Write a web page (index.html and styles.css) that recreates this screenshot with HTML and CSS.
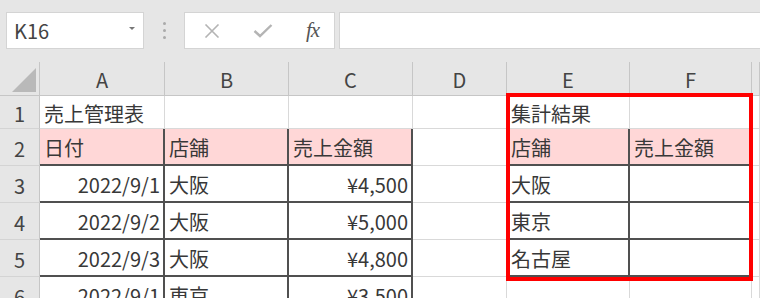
FILE: index.html
```html
<!DOCTYPE html>
<html lang="ja">
<head>
    <meta charset="UTF-8">
    <meta name="viewport" content="width=device-width, initial-scale=1.0">
    <title>売上管理表</title>
    <link rel="stylesheet" href="styles.css">
</head>
<body>
    <div class="toolbar">
        <div class="namebox"><span>K16</span><span class="caret"></span></div>
        <div class="grip"><i></i><i></i><i></i></div>
        <div class="fbuttons">
            <svg class="ico" width="18" height="14" viewBox="0 0 18 14"><path d="M2.5 0.5 L15.5 13.5 M15.5 0.5 L2.5 13.5" stroke="#b4b4b4" stroke-width="1.6" fill="none"/></svg>
            <svg class="ico" width="20" height="14" viewBox="0 0 20 14"><path d="M1.5 7 L7 12 L18.5 1" stroke="#b4b4b4" stroke-width="2.4" fill="none"/></svg>
            <span class="fx">fx</span>
        </div>
        <div class="formula"></div>
    </div>

    <div class="sheet">
        <div class="corner"><svg width="24" height="24" viewBox="0 0 24 24"><polygon points="0,24 24,24 24,0" fill="#b9b9b9"/></svg></div>
        <div class="colhead">A</div>
        <div class="colhead">B</div>
        <div class="colhead">C</div>
        <div class="colhead">D</div>
        <div class="colhead">E</div>
        <div class="colhead">F</div>
        <div class="colhead"></div>

        <div class="rowhead">1</div>
        <div class="cell">売上管理表</div>
        <div class="cell"></div>
        <div class="cell"></div>
        <div class="cell"></div>
        <div class="cell">集計結果</div>
        <div class="cell"></div>
        <div class="cell"></div>

        <div class="rowhead">2</div>
        <div class="cell head">日付</div>
        <div class="cell head">店舗</div>
        <div class="cell head">売上金額</div>
        <div class="cell"></div>
        <div class="cell head">店舗</div>
        <div class="cell head">売上金額</div>
        <div class="cell"></div>

        <div class="rowhead">3</div>
        <div class="cell tb num">2022/9/1</div>
        <div class="cell tb">大阪</div>
        <div class="cell tb num">¥4,500</div>
        <div class="cell"></div>
        <div class="cell tb">大阪</div>
        <div class="cell tb"></div>
        <div class="cell"></div>

        <div class="rowhead">4</div>
        <div class="cell tb num">2022/9/2</div>
        <div class="cell tb">大阪</div>
        <div class="cell tb num">¥5,000</div>
        <div class="cell"></div>
        <div class="cell tb">東京</div>
        <div class="cell tb"></div>
        <div class="cell"></div>

        <div class="rowhead">5</div>
        <div class="cell tb num">2022/9/3</div>
        <div class="cell tb">大阪</div>
        <div class="cell tb num">¥4,800</div>
        <div class="cell"></div>
        <div class="cell tb">名古屋</div>
        <div class="cell tb"></div>
        <div class="cell"></div>

        <div class="rowhead">6</div>
        <div class="cell tb num">2022/9/1</div>
        <div class="cell tb">東京</div>
        <div class="cell tb num">¥3,500</div>
        <div class="cell"></div>
        <div class="cell"></div>
        <div class="cell"></div>
        <div class="cell"></div>

        <div class="highlight"></div>
    </div>
</body>
</html>
```

FILE: styles.css
```css
body { margin: 0; background: #e6e6e6; font-family: "Noto Sans CJK JP", "Noto Sans", sans-serif; color: #383838; overflow: hidden; height: 298px; }

/* formula bar */
.toolbar { display: flex; align-items: center; height: 62px; padding: 0 0 1px 6px; box-sizing: border-box; background: #e6e6e6; }
.namebox { width: 138px; height: 37px; box-sizing: border-box; background: #fff; border: 1px solid #d4d4d4; display: flex; align-items: center; justify-content: space-between; padding: 0 8px 0 7px; font-size: 20px; color: #444; }
.caret { width: 0; height: 0; border-left: 3px solid transparent; border-right: 3px solid transparent; border-top: 3px solid #777; margin-top: -4px; }
.grip { display: flex; flex-direction: column; gap: 4px; margin: 0 18px 0 19px; }
.grip i { display: block; width: 3px; height: 3px; border-radius: 50%; background: #aaa; }
.fbuttons { width: 151px; height: 37px; box-sizing: border-box; background: #fff; border: 1px solid #d4d4d4; display: flex; align-items: center; padding: 0 0 0 18px; gap: 32px; }
.fx { font-family: "Liberation Serif", serif; font-style: italic; font-size: 21px; color: #555; margin-left: 1px; letter-spacing: -1px; }
.formula { flex: 1; height: 37px; margin-left: 4px; background: #fff; border: 1px solid #d4d4d4; border-right: none; box-sizing: border-box; }

/* sheet */
.sheet { position: relative; height: 236px; overflow: hidden; display: grid; grid-template-columns: 40px 125px 124px 124px 94px 123px 122px 1fr; grid-template-rows: 34px 33px 37px 37px 37px 37px 37px; background: #fff; }
.corner { background: #e6e6e6; border-right: 1px solid #c6c6c6; border-bottom: 1px solid #c6c6c6; display: flex; align-items: flex-end; justify-content: flex-end; padding: 0 3px 3px 0; }
.colhead { background: #e6e6e6; border-right: 1px solid #c6c6c6; border-bottom: 1px solid #c6c6c6; display: flex; align-items: center; justify-content: center; font-size: 20px; color: #444; padding-top: 2px; }
.rowhead { background: #e6e6e6; border-right: 1px solid #c6c6c6; border-bottom: 1px solid #d4d4d4; display: flex; align-items: center; justify-content: center; font-size: 20px; color: #444; padding-top: 2px; }
.cell { border-right: 1px solid #d9d9d9; border-bottom: 1px solid #d9d9d9; display: flex; align-items: center; padding: 2px 3px 0 4px; font-size: 20px; white-space: nowrap; overflow: hidden; }
.cell.num { justify-content: flex-end; }
.cell.head { background: #ffd7d7; border-right: 2px solid #505050; border-bottom: 2px solid #505050; }
.cell.tb { border-right: 2px solid #505050; border-bottom: 2px solid #505050; }

/* red frame around the summary table (grid area is its containing block) */
.highlight { position: absolute; grid-column: 6 / 8; grid-row: 2 / 7; top: -3px; left: -1px; right: -1px; bottom: -4px; border: 4px solid #f00; pointer-events: none; }
```
